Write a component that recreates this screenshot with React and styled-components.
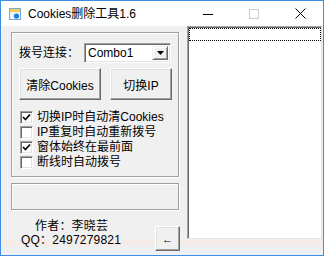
import React from "react";
import styled, { createGlobalStyle } from "styled-components";

const GlobalStyle = createGlobalStyle`
  html, body {
    margin: 0;
    padding: 0;
    background: #ffffff;
  }
  body {
    font-family: "Liberation Sans", "Noto Sans CJK SC", sans-serif;
    font-size: 12px;
    color: #000;
  }
`;

const Window = styled.div`
  width: 322px;
  height: 254px;
  border: 1px solid #3d8ee0;
  display: flex;
  flex-direction: column;
  background: #ffffff;
`;

const TitleBar = styled.div`
  height: 25px;
  flex-shrink: 0;
  display: flex;
  align-items: center;
  background: #ffffff;
`;

const TitleIcon = styled.svg`
  width: 12px;
  height: 12px;
  margin-left: 8px;
  margin-right: 7px;
  flex-shrink: 0;
`;

const TitleText = styled.div`
  flex: 1;
  font-size: 12px;
  line-height: 14px;
  margin-top: 1px;
`;

const Controls = styled.div`
  display: flex;
  height: 25px;
`;

const ControlButton = styled.div`
  width: 46px;
  height: 25px;
  display: flex;
  align-items: center;
  justify-content: center;
`;

const Client = styled.div`
  flex: 1;
  min-height: 0;
  display: flex;
  background: linear-gradient(
    to bottom,
    #f0f0f0 0,
    #f0f0f0 213px,
    #f6ece7 214px,
    #f4ece8 220px,
    #eef0f3 221px,
    #eef0f3 100%
  );
`;

const LeftPane = styled.div`
  width: 176px;
  padding: 6px 0 0 10px;
  display: flex;
  flex-direction: column;
`;

const GroupBox = styled.div`
  width: 168px;
  height: 145px;
  box-sizing: border-box;
  border: 1px solid #a0a0a0;
  box-shadow: 1px 1px 0 #fff, inset 1px 1px 0 #fff;
  padding: 10px 0 0 7px;
  display: flex;
  flex-direction: column;
  flex-shrink: 0;
`;

const Row = styled.div`
  display: flex;
  align-items: center;
  gap: ${(p) => p.$gap || 0}px;
  margin-top: ${(p) => p.$top || 0}px;
`;

const Label = styled.div`
  width: 65px;
  line-height: 20px;
  font-size: 12px;
`;

const Combo = styled.div`
  width: 87px;
  height: 20px;
  box-sizing: border-box;
  background: #fff;
  border: 1px solid;
  border-color: #a0a0a0 #fff #fff #a0a0a0;
  box-shadow: inset 1px 1px 0 #696969, inset -1px -1px 0 #e3e3e3;
  display: flex;
  align-items: center;
  padding: 0 2px 0 3px;
`;

const ComboText = styled.div`
  flex: 1;
  font-size: 12px;
  line-height: 14px;
`;

const DropButton = styled.div`
  width: 16px;
  height: 14px;
  box-sizing: border-box;
  background: #f0f0f0;
  border: 1px solid;
  border-color: #f0f0f0 #696969 #696969 #f0f0f0;
  box-shadow: inset 1px 1px 0 #fff, inset -1px -1px 0 #a0a0a0;
  display: flex;
  align-items: center;
  justify-content: center;
`;

const Button = styled.div`
  width: ${(p) => p.$w}px;
  height: ${(p) => p.$h}px;
  box-sizing: border-box;
  background: #f0f0f0;
  border: 1px solid;
  border-color: #fff #696969 #696969 #fff;
  box-shadow: inset -1px -1px 0 #a0a0a0, inset 1px 1px 0 #e3e3e3;
  display: flex;
  align-items: center;
  justify-content: center;
  font-size: ${(p) => p.$fs || 12}px;
  flex-shrink: 0;
`;

const CheckList = styled.div`
  display: flex;
  flex-direction: column;
  margin-top: 10px;
`;

const CheckRow = styled.div`
  height: 15px;
  display: flex;
  align-items: center;
  margin-left: 1px;
`;

const Box = styled.div`
  width: 13px;
  height: 13px;
  box-sizing: border-box;
  background: #fff;
  border: 1px solid;
  border-color: #a0a0a0 #fff #fff #a0a0a0;
  box-shadow: inset 1px 1px 0 #696969, inset -1px -1px 0 #e3e3e3;
  display: flex;
  align-items: center;
  justify-content: center;
  margin-right: 4px;
  flex-shrink: 0;
`;

const CheckText = styled.div`
  font-size: 12px;
  line-height: 15px;
  white-space: nowrap;
`;

const StatusBox = styled.div`
  width: 168px;
  height: 27px;
  box-sizing: border-box;
  flex-shrink: 0;
  margin-top: 6px;
  border: 1px solid #a0a0a0;
  box-shadow: 1px 1px 0 #fff, inset 1px 1px 0 #fff;
`;

const Footer = styled.div`
  display: flex;
  justify-content: space-between;
  width: 169px;
`;

const Author = styled.div`
  padding: 9px 0 0 10px;
  display: flex;
  flex-direction: column;
`;

const AuthorLine = styled.div`
  line-height: 14px;
  font-size: 12px;
  margin-left: ${(p) => p.$indent || 0}px;
  white-space: nowrap;
  letter-spacing: 0.2px;
`;

const ArrowSlot = styled.div`
  margin-top: 16px;
`;

const RightPane = styled.div`
  flex: 1;
  padding-right: 1px;
  display: flex;
  flex-direction: column;
`;

const ListBox = styled.div`
  height: 213px;
  box-sizing: border-box;
  background: #fff;
  border: 1px solid;
  border-color: #a0a0a0 #e3e3e3 #e3e3e3 #a0a0a0;
  box-shadow: inset 1px 1px 0 #696969;
  padding: 1px 0 0 1px;
`;

const FocusItem = styled.div`
  height: 13px;
  box-sizing: border-box;
  border: 1px dotted #000;
`;

const checks = [
  { text: "切换IP时自动清Cookies", on: true },
  { text: "IP重复时自动重新拨号", on: false },
  { text: "窗体始终在最前面", on: true },
  { text: "断线时自动拨号", on: false },
];

function Check({ on }) {
  return (
    <Box>
      {on && (
        <svg width="9" height="9" viewBox="0 0 9 9">
          <polyline points="1,4 3.5,6.5 8,1.5" fill="none" stroke="#000" strokeWidth="1.7" />
        </svg>
      )}
    </Box>
  );
}

export default function App() {
  return (
    <>
      <GlobalStyle />
      <Window>
        <TitleBar>
          <TitleIcon viewBox="0 0 12 12">
            <rect x="0.5" y="0.5" width="11" height="11" fill="#eaf3fb" stroke="#7aa7d6" />
            <rect x="1" y="1" width="10" height="3" fill="#f3cf5a" />
            <circle cx="7.5" cy="8" r="2.6" fill="#1f7fd8" />
          </TitleIcon>
          <TitleText>Cookies删除工具1.6</TitleText>
          <Controls>
            <ControlButton>
              <svg width="10" height="10" viewBox="0 0 10 10">
                <line x1="0" y1="5.5" x2="10" y2="5.5" stroke="#000" strokeWidth="1" />
              </svg>
            </ControlButton>
            <ControlButton>
              <svg width="10" height="10" viewBox="0 0 10 10">
                <rect x="0.5" y="0.5" width="9" height="9" fill="none" stroke="#cccccc" strokeWidth="1" />
              </svg>
            </ControlButton>
            <ControlButton>
              <svg width="11" height="11" viewBox="0 0 11 11">
                <path d="M0.5 0.5 L10.5 10.5 M10.5 0.5 L0.5 10.5" stroke="#000" strokeWidth="1" />
              </svg>
            </ControlButton>
          </Controls>
        </TitleBar>
        <Client>
          <LeftPane>
            <GroupBox>
              <Row>
                <Label>拨号连接：</Label>
                <Combo>
                  <ComboText>Combo1</ComboText>
                  <DropButton>
                    <svg width="7" height="4" viewBox="0 0 7 4">
                      <polygon points="0,0 7,0 3.5,4" fill="#000" />
                    </svg>
                  </DropButton>
                </Combo>
              </Row>
              <Row $top={5} $gap={9}>
                <Button $w={82} $h={32}>清除Cookies</Button>
                <Button $w={62} $h={32}>切换IP</Button>
              </Row>
              <CheckList>
                {checks.map((c) => (
                  <CheckRow key={c.text}>
                    <Check on={c.on} />
                    <CheckText>{c.text}</CheckText>
                  </CheckRow>
                ))}
              </CheckList>
            </GroupBox>
            <StatusBox />
            <Footer>
              <Author>
                <AuthorLine $indent={14}>作者：李晓芸</AuthorLine>
                <AuthorLine>QQ：2497279821</AuthorLine>
              </Author>
              <ArrowSlot>
                <Button $w={25} $h={25} $fs={11}>←</Button>
              </ArrowSlot>
            </Footer>
          </LeftPane>
          <RightPane>
            <ListBox>
              <FocusItem />
            </ListBox>
          </RightPane>
        </Client>
      </Window>
    </>
  );
}
